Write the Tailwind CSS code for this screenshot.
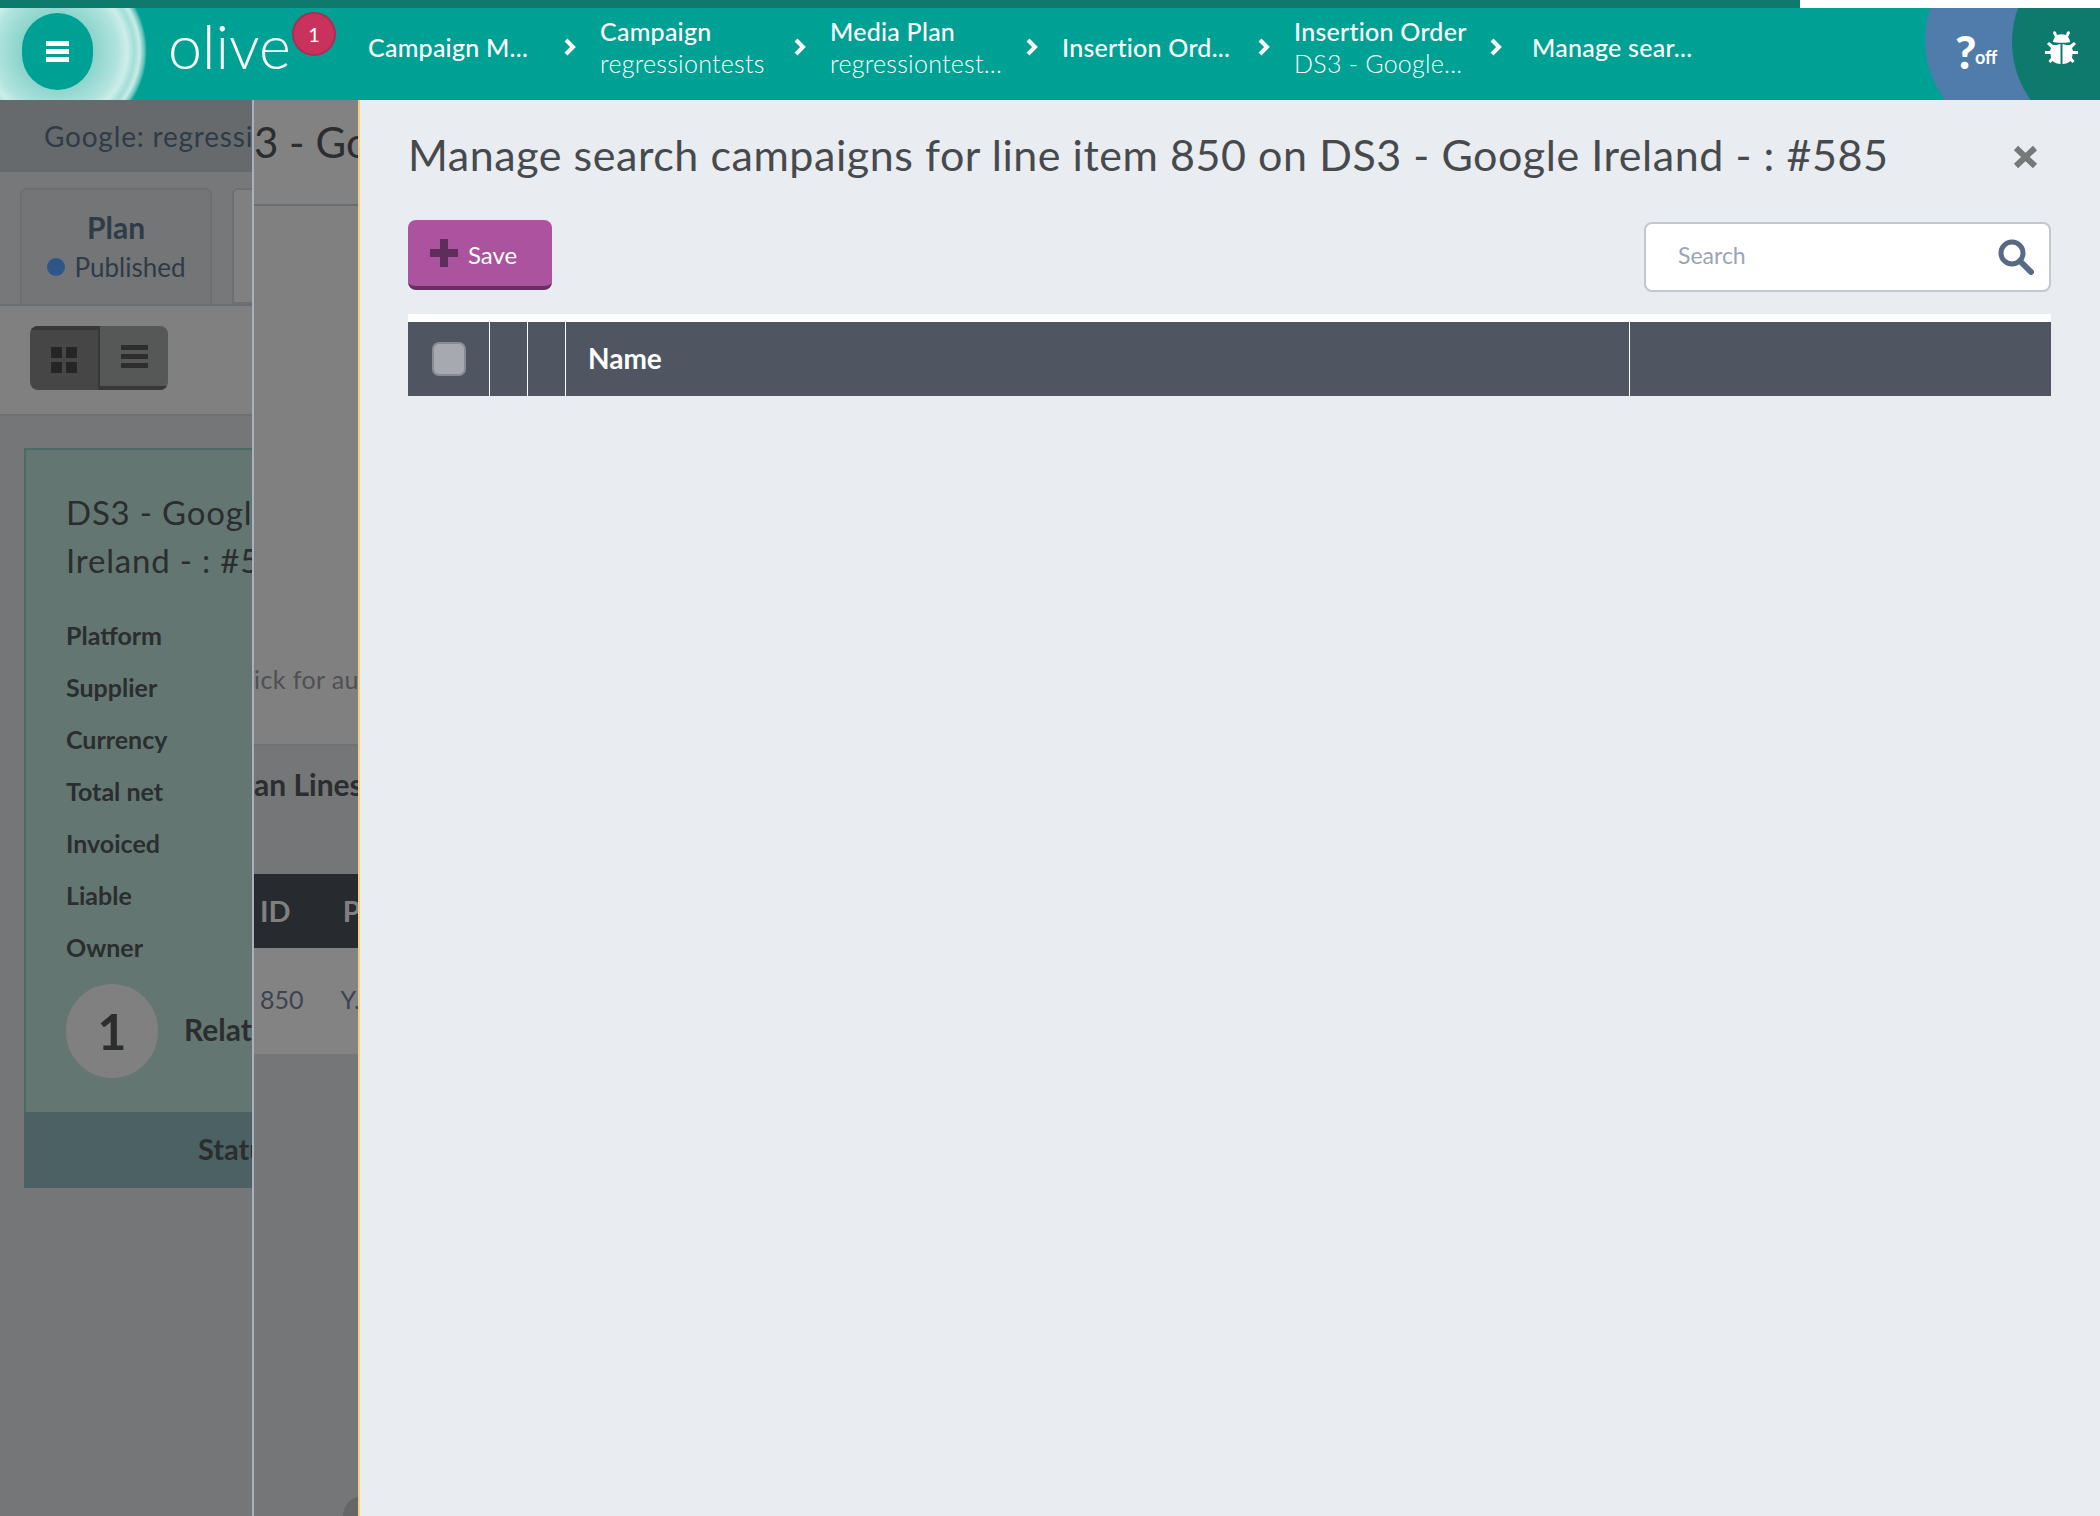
<!DOCTYPE html>
<html><head><meta charset="utf-8"><script src="https://cdn.jsdelivr.net/npm/@tailwindcss/browser@4"></script></head>
<body class="m-0 font-['Lato',sans-serif]">
<div class="w-[2100px] h-[1516px] flex flex-col overflow-hidden bg-[#e9ecf1]">
  <div class="h-2 flex shrink-0"><div class="w-[1800px] bg-[#0e7a6d]"></div><div class="flex-1 bg-white"></div></div>
  <header class="h-[92px] shrink-0 bg-[#00a195] flex items-start relative overflow-hidden text-white">
    <div class="absolute left-[-33px] top-[-47px] w-[180px] h-[180px] rounded-full bg-[radial-gradient(circle_closest-side,#8ad4cc_0%,#8ad4cc_40%,#b2e3de_68%,#cdeeea_78%,#a3ded7_86%,#c9ece8_92%,#64c4ba_97%,#00a195_100%)]"></div>
    <div class="absolute left-[22px] top-[5px] w-[71px] h-[77px] rounded-full bg-[#00a195] flex flex-col items-center justify-center gap-[3px]">
      <div class="w-[23px] h-[5px] bg-white"></div><div class="w-[23px] h-[5px] bg-white"></div><div class="w-[23px] h-[5px] bg-white"></div>
    </div>
    <div class="absolute left-[168px] top-[-2px] text-[61px] leading-[80px] font-light">olive</div>
    <div class="absolute left-[292px] top-[4px] w-[44px] h-[44px] rounded-full bg-[#c9325c] border-2 border-[#ad2c54] flex items-center justify-center text-[20px]">1</div>
    <nav class="ml-[368px] flex items-center h-[78px] w-[1500px] text-[25px] leading-[32px] font-medium tracking-[0.25px]">
      <div class="w-[232px] flex items-center shrink-0"><div class="w-[196px]">Campaign M...</div><svg width="12" height="18" viewBox="0 0 12 18"><path d="M2 2l7 7-7 7" fill="none" stroke="#fff" stroke-width="4"/></svg></div>
      <div class="w-[230px] flex items-center shrink-0"><div class="w-[194px]"><div>Campaign</div><div class="font-light">regressiontests</div></div><svg width="12" height="18" viewBox="0 0 12 18"><path d="M2 2l7 7-7 7" fill="none" stroke="#fff" stroke-width="4"/></svg></div>
      <div class="w-[232px] flex items-center shrink-0"><div class="w-[196px]"><div>Media Plan</div><div class="font-light">regressiontest...</div></div><svg width="12" height="18" viewBox="0 0 12 18"><path d="M2 2l7 7-7 7" fill="none" stroke="#fff" stroke-width="4"/></svg></div>
      <div class="w-[232px] flex items-center shrink-0"><div class="w-[196px]">Insertion Ord...</div><svg width="12" height="18" viewBox="0 0 12 18"><path d="M2 2l7 7-7 7" fill="none" stroke="#fff" stroke-width="4"/></svg></div>
      <div class="w-[238px] flex items-center shrink-0"><div class="w-[196px]"><div class="whitespace-nowrap">Insertion Order</div><div class="font-light">DS3 - Google...</div></div><svg width="12" height="18" viewBox="0 0 12 18"><path d="M2 2l7 7-7 7" fill="none" stroke="#fff" stroke-width="4"/></svg></div>
      <div class="shrink-0">Manage sear...</div>
    </nav>
    <div class="absolute left-[1925px] top-[-68px] w-[200px] h-[200px] rounded-full bg-[#4f7cab]">
      <span class="absolute left-[30px] top-[87px] text-[46px] leading-[50px] font-black">?</span><span class="absolute left-[50px] top-[107px] text-[18px] leading-[20px] font-bold">off</span>
    </div>
    <div class="absolute left-[2012px] top-[-66px] w-[200px] h-[200px] rounded-full bg-[#0e7a6d]"></div>
    <svg class="absolute left-[2045px] top-[23px]" width="33" height="33" viewBox="0 0 33 33" fill="#fff"><path d="M9 0l2 1 1 3c3-1 6-1 9 0l1-3 2-1 1 2-2 4c1 1 2 3 2 5-1 1-15 1-17 0 0-2 1-4 2-5L8 2z"/><path d="M15.5 13v20c-3 0-6-1-8-3l-2 2-2-2 2.500-3-.5-4H0v-3h5l1-3-4-4 2-2 4 3c2 0 5 0 7.500-1zM17.500 13v20c3 0 6-1 8-3l2 2 2-2-2.500-3 .5-4H33v-3h-5l-1-3 4-4-2-2-4 3c-2 0-5 0-7.500-1z"/></svg>
  </header>
  <div class="flex-1 flex min-h-0">
    <aside class="w-[252px] shrink-0 overflow-hidden bg-[#757678] flex flex-col">
      <div class="h-[72px] bg-[#666a6d] pl-[44px] flex items-center text-[28px] tracking-[0.8px] text-[#2f3b47] whitespace-nowrap shrink-0">Google: regressions</div>
      <div class="h-[134px] bg-[#76787a] flex gap-[20px] pl-[20px] pt-[16px] shrink-0 border-b-2 border-[#6b6e70]">
        <div class="w-[192px] h-[116px] shrink-0 bg-[#737577] border-2 border-b-0 border-[#6d6f71] rounded-t-[6px] flex flex-col items-center pt-[17px]">
          <div class="text-[30px] leading-[40px] font-bold text-[#2f3b47]">Plan</div>
          <div class="flex items-center gap-[10px] text-[26px] leading-[36px] mt-[2px] text-[#2f3b47]"><span class="w-[18px] h-[18px] rounded-full bg-[#2e5689]"></span>Published</div>
        </div>
        <div class="w-[60px] h-[116px] shrink-0 bg-[#808080] border-2 border-[#6d6f71] rounded-tl-[6px]"></div>
      </div>
      <div class="h-[110px] bg-[#808080] border-b-2 border-[#6d6f71] pl-[30px] pt-[20px] shrink-0">
        <div class="w-[138px] h-[64px] flex rounded-[8px] overflow-hidden">
          <div class="w-[70px] bg-[#464646] border-t-4 border-r-2 border-[#383838] flex items-center justify-center">
            <div class="grid grid-cols-2 gap-[4px]"><span class="w-[11px] h-[11px] bg-[#252525]"></span><span class="w-[11px] h-[11px] bg-[#252525]"></span><span class="w-[11px] h-[11px] bg-[#252525]"></span><span class="w-[11px] h-[11px] bg-[#252525]"></span></div>
          </div>
          <div class="w-[68px] bg-[#565757] border-b-4 border-[#383838] flex flex-col items-center justify-center gap-[4px]"><span class="w-[27px] h-[5px] bg-[#2d2d2d]"></span><span class="w-[27px] h-[5px] bg-[#2d2d2d]"></span><span class="w-[27px] h-[5px] bg-[#2d2d2d]"></span></div>
        </div>
      </div>
      <div class="ml-[24px] mt-[32px] w-[260px] shrink-0 border-l-2 border-t-2 border-[#4e6a67] bg-[#637672] text-[#2b2d2e]">
        <div class="pl-[40px] pt-[38px] h-[662px]">
          <div class="text-[33px] tracking-[0.8px] leading-[48px] whitespace-nowrap">DS3 - Google<br>Ireland - : #585</div>
          <div class="mt-[25px] text-[25px] font-bold leading-[52px]">
            <div>Platform</div><div>Supplier</div><div>Currency</div><div>Total net</div><div>Invoiced</div><div>Liable</div><div>Owner</div>
          </div>
          <div class="mt-[11px] flex items-center gap-[26px]"><div class="w-[92px] h-[94px] rounded-full bg-[#808080] flex items-center justify-center text-[50px] font-bold shrink-0">1</div><div class="text-[30px] font-bold whitespace-nowrap relative top-[-2px]">Related</div></div>
        </div>
        <div class="h-[76px] -ml-[2px] bg-[#4b6163] pl-[174px] pb-[2px] flex items-center text-[29px] font-bold">Status</div>
      </div>
    </aside>
    <div class="w-[2px] shrink-0 bg-[#a9b0c0]"></div>
    <main class="w-[104px] shrink-0 overflow-hidden relative bg-[#757678] flex flex-col text-[#2b2d2e] whitespace-nowrap">
      <div class="h-[106px] bg-[#828282] border-b-2 border-[#6b6e70] shrink-0 pt-[14px] text-[42px] leading-[56px]">3 - Google</div>
      <div class="h-[540px] bg-[#808080] border-b-2 border-[#707173] shrink-0 pt-[455px] text-[25px] tracking-[0.4px] leading-[36px] text-[#4f5052]">ick for audit</div>
      <div class="h-[128px] shrink-0 pt-[16px] text-[30px] font-bold leading-[44px]">an Lines</div>
      <div class="h-[74px] shrink-0 bg-[#272b2f] flex items-center gap-[52px] pl-[6px] text-[29px] font-bold text-[#808080]"><span>ID</span><span>P</span></div>
      <div class="h-[106px] shrink-0 bg-[#838383] flex items-center gap-[37px] pl-[6px] text-[25px] text-[#3a4452] pb-[2px]"><span>850</span><span>Y.</span></div>
      <div class="absolute left-[89px] top-[1396px] w-[40px] h-[40px] rounded-full bg-[#666]"></div>
    </main>
    <div class="w-[2px] shrink-0 bg-[#f5cf7a]"></div>
    <section class="flex-1 bg-[#e9ecf1] pl-[48px] pr-[49px] relative">
      <h1 class="pt-[30px] h-[120px] text-[43px] tracking-[0.55px] leading-[50px] text-[#474a4d] font-normal whitespace-nowrap">Manage search campaigns for line item 850 on DS3 - Google Ireland - : #585</h1>
      <svg class="absolute left-[1653px] top-[45px]" width="25" height="24" viewBox="0 0 25 24"><path d="M3 3l19 18M22 3L3 21" stroke="#77787a" stroke-width="6"/></svg>
      <div class="flex justify-between items-start">
        <button class="w-[144px] h-[70px] bg-[#ab539f] border-b-4 border-[#65305f] rounded-[8px] flex items-center pl-[22px] gap-[10px] text-white text-[24px]">
          <svg width="28" height="28" viewBox="0 0 28 28"><path d="M10 0h8v10h10v8H18v10h-8V18H0v-8h10z" fill="#5f2d5c"/></svg><span class="relative top-[2px]">Save</span></button>
        <div class="mt-[2px] w-[407px] h-[70px] bg-white border-2 border-[#c1c8d2] rounded-[8px] flex items-center justify-between pl-[32px] pr-[15px] text-[23px] text-[#9aa5b5]">
          <span class="relative top-[-2px]">Search</span>
          <svg width="36" height="36" viewBox="0 0 36 36" fill="none" stroke="#566a85"><circle cx="14" cy="14" r="11" stroke-width="5"/><path d="M22 22l11 11" stroke-width="6" stroke-linecap="round"/></svg>
        </div>
      </div>
      <div class="mt-[22px] h-2 bg-white"></div>
      <div class="h-[74px] bg-[#4f5662] flex text-white text-[28px] font-bold">
        <div class="w-[82px] border-r border-white flex items-center pl-[24px]"><span class="w-[34px] h-[34px] rounded-[7px] bg-[#a6a9b0] border-2 border-[#868b95]"></span></div>
        <div class="w-[38px] border-r border-white"></div>
        <div class="w-[38px] border-r border-white"></div>
        <div class="w-[1064px] border-r border-white flex items-center pl-[22px] pb-[2px]">Name</div>
      </div>
    </section>
  </div>
</div>
</body></html>
